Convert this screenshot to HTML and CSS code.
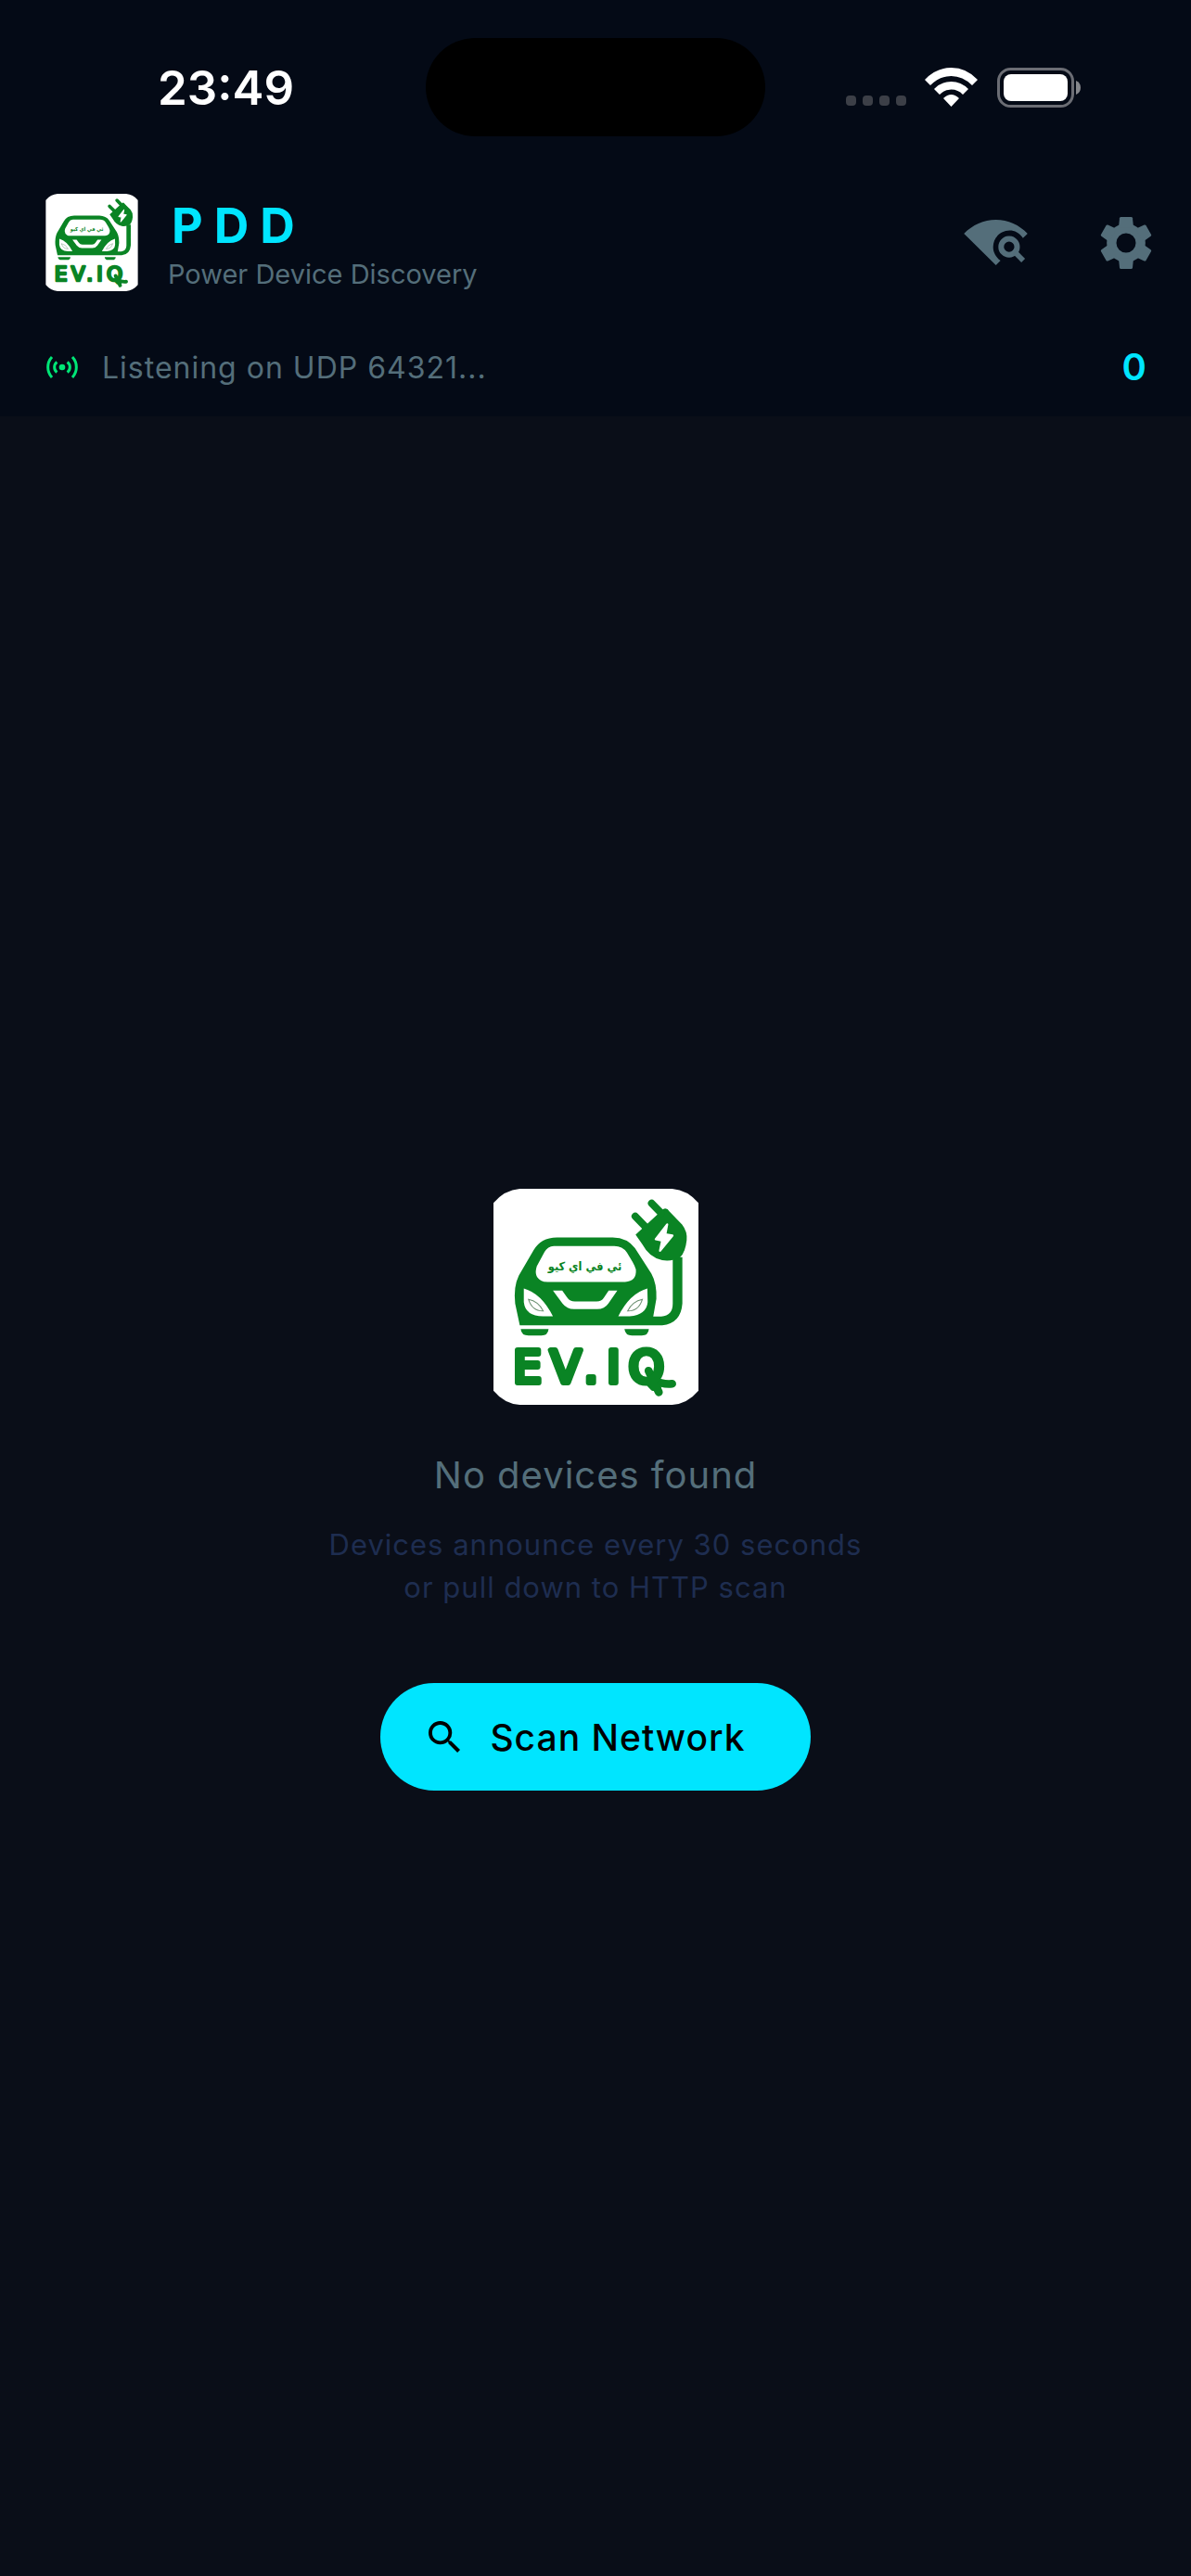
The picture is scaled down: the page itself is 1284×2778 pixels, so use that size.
FILE: index.html
```html
<!DOCTYPE html>
<html lang="en">

<head>
    <meta charset="UTF-8">
    <meta name="viewport" content="width=device-width, initial-scale=1.0">
    <title>PDD - Power Device Discovery</title>
    <link rel="stylesheet" href="styles.css">
</head>

<body>
    <!-- shared logo drawing -->
    <svg class="defs" aria-hidden="true">
        <symbol id="logo" viewBox="35 34 662 698">
            <path fill="#fff" d="M35 80Q70 38 120 34H612Q662 38 697 80V686Q662 728 612 732H120Q70 728 35 686Z" />
            <g fill="#0a8424">
                <!-- car -->
                <path fill-rule="evenodd" d="M120 475L105 405Q99 350 117 314L165 232Q187 192 240 191H420Q468 192 492 226L545 308Q563 340 561 390L551 447H577Q614 444 614 405V255H645V405Q640 470 580 475ZM230 219Q210 220 200 238L175 284Q164 318 190 331Q196 335 210 335H460Q498 333 495 295Q492 284 484 270L466 240Q452 219 425 219ZM227 363H257L273 385Q282 398 298 398H368Q384 398 392 385L407 363H435L406 405Q394 423 370 423H295Q272 423 258 405ZM133 356Q190 372 227 446H195Q138 445 133 400ZM532 356Q475 372 438 446H475Q530 440 533 400Z" />
                <path d="M123 487H213Q211 508 190 508H148Q125 508 123 487ZM458 487H537Q535 508 514 508H482Q461 508 458 487Z" />
                <!-- plug -->
                <path d="M494 182L583 100Q594 93 604 108L644 149Q662 172 659 200Q655 238 638 255Q612 270 580 265Q538 256 516 214Z" />
                <path fill="none" stroke="#0a8424" stroke-width="24" stroke-linecap="round" d="M493 123L525 156M546 81L576 112" />
                <!-- plug prongs under the name -->
                <path fill="none" stroke="#0a8424" stroke-width="26" stroke-linecap="round" d="M536 622L569 691M552 652Q580 667 612 664" />
            </g>
            <path fill="#fff" stroke="#fff" stroke-width="7" stroke-linejoin="round" d="M596 149L559 197L580 201L573 234L613 185L590 181Z" />
            <path fill="none" stroke="#6a8f70" stroke-width="3" d="M148 391Q180 397 196 429Q160 430 148 391ZM516 391Q484 397 468 429Q504 430 516 391Z" />
        </symbol>
    </svg>

    <header class="header">
        <div class="status-bar">
            <div class="time">23:49</div>
            <div class="island"></div>
            <div class="status-icons">
                <div class="dots"><i></i><i></i><i></i><i></i></div>
                <svg class="wifi" viewBox="0 0 57 42">
                    <path fill="#fff" d="M0 13Q12 0 28.500 0T57 13L51 19Q41 9 28.500 9T6 19ZM10 23Q18 15 28.500 15T47 23L41 29Q36 23.500 28.500 23.500T16 29ZM20 33Q28.500 25 37 33L28.500 42Z" />
                </svg>
                <svg class="battery" viewBox="0 0 91 43">
                    <rect x="1.500" y="1.500" width="80" height="40" rx="13" fill="none" stroke="#6b6d74" stroke-width="3" />
                    <rect x="7" y="7" width="69" height="29" rx="8" fill="#fff" />
                    <path fill="#85878c" d="M85 14Q90 16 90 21.500T85 29Z" />
                </svg>
            </div>
        </div>

        <div class="title-bar">
            <svg class="logo-small" viewBox="35 34 662 698" role="img" aria-label="EV.IQ">
                <use href="#logo" x="35" y="34" width="662" height="698" />
                <text class="logo-arabic" x="330" y="299" text-anchor="middle">ئي في اي كيو</text>
                <text class="logo-name" x="99" y="660">EV.IQ</text>
            </svg>
            <div class="titles">
                <h1>PDD</h1>
                <p>Power Device Discovery</p>
            </div>
            <div class="actions">
                <button class="icon-btn" aria-label="Scan network">
                    <svg class="icon-find" viewBox="58 84 207 148">
                        <path fill="currentColor" d="M58 129C86 101 122 84 162 84S238 101 265 129L250 144C240 128 224 119 207 119C177 119 153 143 153 173C153 190 162 206 177 217L162 232Z" />
                        <circle cx="205" cy="172" r="26" fill="none" stroke="currentColor" stroke-width="18" />
                        <path fill="none" stroke="currentColor" stroke-width="17" d="M224 190L251 217" />
                    </svg>
                </button>
                <button class="icon-btn" aria-label="Settings">
                    <svg class="icon-gear" viewBox="-84 -84 168 168">
                        <circle r="47" fill="none" stroke="currentColor" stroke-width="31" />
                        <g fill="currentColor">
                            <path id="tooth" d="M-24 -50L-21 -80Q-20 -84 -17 -84H17Q20 -84 21 -80L24 -50Z" />
                            <use href="#tooth" transform="rotate(60)" />
                            <use href="#tooth" transform="rotate(120)" />
                            <use href="#tooth" transform="rotate(180)" />
                            <use href="#tooth" transform="rotate(240)" />
                            <use href="#tooth" transform="rotate(300)" />
                        </g>
                    </svg>
                </button>
            </div>
        </div>

        <div class="listen-bar">
            <svg class="icon-sensor" viewBox="-51 -36 102 72">
                <circle r="10" fill="#00e676" />
                <path fill="none" stroke="#00e676" stroke-width="9" d="M-33 -33Q-46 -19 -46 0T-33 33M33 -33Q46 -19 46 0T33 33M-17 -17Q-25 -10 -25 0T-17 17M17 -17Q25 -10 25 0T17 17" />
            </svg>
            <span class="listen-text">Listening on UDP 64321...</span>
            <span class="count">0</span>
        </div>
    </header>

    <main class="empty">
        <svg class="logo-large" viewBox="35 34 662 698" role="img" aria-label="EV.IQ">
            <use href="#logo" x="35" y="34" width="662" height="698" />
            <text class="logo-arabic" x="330" y="299" text-anchor="middle">ئي في اي كيو</text>
            <text class="logo-name" x="99" y="660">EV.IQ</text>
        </svg>
        <h2>No devices found</h2>
        <p>Devices announce every 30 seconds<br>or pull down to HTTP scan</p>
        <button class="scan-btn">
            <svg class="icon-search" viewBox="3 3 18 18">
                <path fill="currentColor" d="M15.500 14h-.79l-.28-.27A6.470 6.470 0 0 0 16 9.500 6.500 6.500 0 1 0 9.500 16c1.610 0 3.090-.59 4.230-1.570l.27.28v.79l5 4.990L20.490 19l-4.990-5zm-6 0C7.010 14 5 11.990 5 9.500S7.010 5 9.500 5 14 7.010 14 9.500 11.990 14 9.500 14z" />
            </svg>
            Scan Network
        </button>
    </main>
</body>

</html>
```
FILE: styles.css
```css
* {
    box-sizing: border-box;
}

body {
    font-family: Inter, Roboto, sans-serif;
    display: flex;
    flex-direction: column;
    min-height: 100vh;
    margin: 0;
    background-color: #0a0e18;
    color: white;
}

h1, h2, p {
    margin: 0;
}

button {
    font-family: inherit;
    border: none;
    cursor: pointer;
}

svg {
    display: block;
    flex-shrink: 0;
}

.defs {
    position: absolute;
    width: 0;
    height: 0;
}

.logo-arabic {
    font-family: "DejaVu Sans Condensed", "DejaVu Sans", sans-serif;
    font-weight: bold;
    font-size: 38px;
    fill: #0a8424;
}

/* thick round stroke gives the letters soft ends */
.logo-name {
    font-family: "DejaVu Sans", sans-serif;
    font-size: 145px;
    letter-spacing: 28px;
    fill: #0a8424;
    stroke: #0a8424;
    stroke-width: 18px;
    stroke-linejoin: round;
}

.header {
    background-color: #040a16;
    padding-bottom: 22px;
}

/* status bar */
.status-bar {
    display: grid;
    grid-template-columns: 1fr 366px 1fr;
    align-items: center;
    padding-top: 41px;
}

.time {
    font-size: 51px;
    font-weight: 600;
    line-height: 64px;
    padding: 2px 0 0 28px;
    text-align: center;
}

.island {
    height: 106px;
    border-radius: 53px;
    background: #000;
}

.status-icons {
    display: flex;
    align-items: center;
    justify-content: flex-end;
    padding-right: 118px;
}

.dots {
    display: flex;
    gap: 7px;
    align-self: flex-end;
    margin: 0 20px 2px 0;
}

.dots i {
    width: 11px;
    height: 11px;
    border-radius: 4px;
    background: #3c3f47;
}

.wifi {
    width: 57px;
    height: 42px;
    margin-right: 21px;
}

.battery {
    width: 91px;
    height: 43px;
}

/* title */
.title-bar {
    display: flex;
    align-items: center;
    padding: 62px 36px 0 49px;
}

.logo-small {
    width: 100px;
    height: 105px;
    margin-right: 32px;
}

.titles {
    flex: 1;
    padding-top: 4px;
}

.titles h1 {
    font-size: 52px;
    font-weight: 700;
    line-height: 60px;
    letter-spacing: 12px;
    padding-left: 4px;
    color: #00e5ff;
}

.titles p {
    margin-top: 4px;
    font-size: 29px;
    line-height: 36px;
    color: #546e7a;
}

.actions {
    display: flex;
    gap: 66px;
}

.icon-btn {
    display: flex;
    align-items: center;
    padding: 6px;
    background: none;
    color: #546e7a;
}

.icon-find {
    width: 69px;
    height: 49px;
}

.icon-gear {
    width: 56px;
    height: 56px;
}

/* listening row */
.listen-bar {
    display: flex;
    align-items: center;
    padding: 51px 48px 0 50px;
}

.icon-sensor {
    width: 34px;
    height: 24px;
    margin-right: 26px;
}

.listen-text {
    flex: 1;
    font-size: 32px;
    letter-spacing: 1px;
    color: #546e7a;
}

.count {
    font-size: 40px;
    font-weight: 600;
    line-height: 62px;
    color: #00e5ff;
}

/* empty state */
.empty {
    flex: 1;
    display: flex;
    flex-direction: column;
    align-items: center;
    justify-content: center;
    padding-bottom: 14px;
    text-align: center;
}

.logo-large {
    width: 221px;
    height: 233px;
    margin-bottom: 50px;
}

.empty h2 {
    font-size: 40px;
    font-weight: 400;
    line-height: 52px;
    letter-spacing: 1px;
    color: #546e7a;
}

.empty p {
    margin: 26px 0 80px;
    font-size: 31px;
    line-height: 46px;
    letter-spacing: 1px;
    color: #1e2d50;
}

.scan-btn {
    display: flex;
    align-items: center;
    gap: 31px;
    height: 116px;
    padding: 0 70px 0 52px;
    border-radius: 58px;
    background: #00e5ff;
    color: #000;
    font-size: 39px;
    font-weight: 500;
    letter-spacing: 1px;
}

.icon-search {
    width: 35px;
    height: 35px;
}
```
